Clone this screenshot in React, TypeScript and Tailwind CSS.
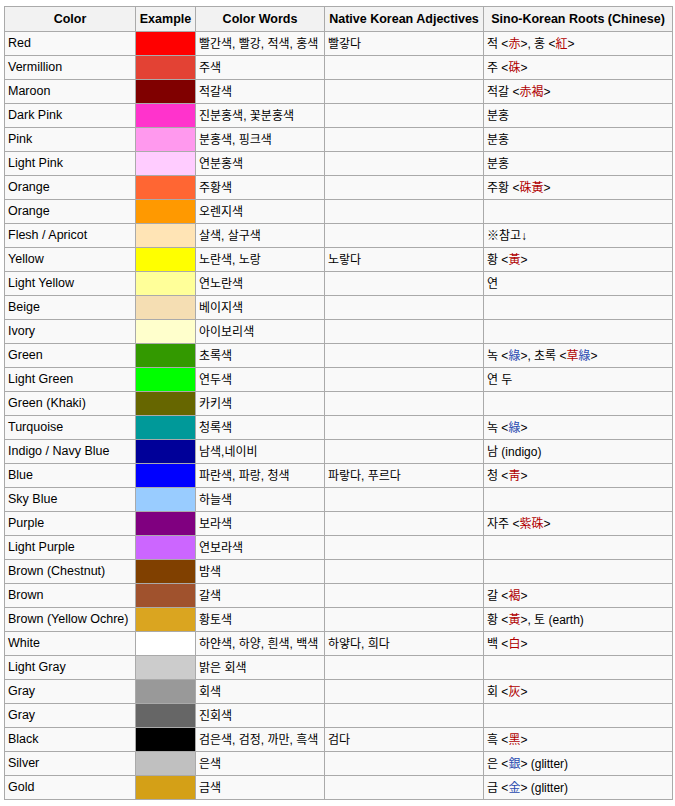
import React from "react";

type Seg = { t: string; c?: "r" | "b" };
type Row = [string, string, string, string, Seg[]];

const R = (t: string): Seg => ({ t, c: "r" });
const B = (t: string): Seg => ({ t, c: "b" });
const T = (t: string): Seg => ({ t });

const rows: Row[] = [
  ["Red", "#ff0000", "빨간색, 빨강, 적색, 홍색", "빨갛다", [T("적 <"), R("赤"), T(">, 홍 <"), R("紅"), T(">")]],
  ["Vermillion", "#e34234", "주색", "", [T("주 <"), R("硃"), T(">")]],
  ["Maroon", "#800000", "적갈색", "", [T("적갈 <"), R("赤褐"), T(">")]],
  ["Dark Pink", "#ff33cc", "진분홍색, 꽃분홍색", "", [T("분홍")]],
  ["Pink", "#ff99ee", "분홍색, 핑크색", "", [T("분홍")]],
  ["Light Pink", "#ffccff", "연분홍색", "", [T("분홍")]],
  ["Orange", "#ff6633", "주황색", "", [T("주황 <"), R("硃黃"), T(">")]],
  ["Orange", "#ff9900", "오렌지색", "", []],
  ["Flesh / Apricot", "#ffe4b5", "살색, 살구색", "", [T("※참고↓")]],
  ["Yellow", "#ffff00", "노란색, 노랑", "노랗다", [T("황 <"), R("黃"), T(">")]],
  ["Light Yellow", "#ffff99", "연노란색", "", [T("연")]],
  ["Beige", "#f5deb3", "베이지색", "", []],
  ["Ivory", "#ffffcc", "아이보리색", "", []],
  ["Green", "#339900", "초록색", "", [T("녹 <"), B("綠"), T(">, 초록 <"), R("草"), B("綠"), T(">")]],
  ["Light Green", "#00ff00", "연두색", "", [T("연 두")]],
  ["Green (Khaki)", "#666600", "카키색", "", []],
  ["Turquoise", "#009999", "청록색", "", [T("녹 <"), B("綠"), T(">")]],
  ["Indigo / Navy Blue", "#000099", "남색,네이비", "", [T("남 (indigo)")]],
  ["Blue", "#0000ff", "파란색, 파랑, 청색", "파랗다, 푸르다", [T("청 <"), R("靑"), T(">")]],
  ["Sky Blue", "#99ccff", "하늘색", "", []],
  ["Purple", "#800080", "보라색", "", [T("자주 <"), R("紫硃"), T(">")]],
  ["Light Purple", "#cc66ff", "연보라색", "", []],
  ["Brown (Chestnut)", "#804000", "밤색", "", []],
  ["Brown", "#a0522d", "갈색", "", [T("갈 <"), R("褐"), T(">")]],
  ["Brown (Yellow Ochre)", "#daa520", "황토색", "", [T("황 <"), R("黃"), T(">, 토 (earth)")]],
  ["White", "#ffffff", "하얀색, 하양, 흰색, 백색", "하얗다, 희다", [T("백 <"), R("白"), T(">")]],
  ["Light Gray", "#cccccc", "밝은 회색", "", []],
  ["Gray", "#999999", "회색", "", [T("회 <"), R("灰"), T(">")]],
  ["Gray", "#666666", "진회색", "", []],
  ["Black", "#000000", "검은색, 검정, 까만, 흑색", "검다", [T("흑 <"), R("黑"), T(">")]],
  ["Silver", "#c0c0c0", "은색", "", [T("은 <"), B("銀"), T("> (glitter)")]],
  ["Gold", "#d4a017", "금색", "", [T("금 <"), B("金"), T("> (glitter)")]],
];

const td = "border border-[#aaaaaa] px-[3px] h-[24px] align-middle whitespace-nowrap";

export default function App() {
  return (
    <div
      className="bg-white pt-[6px] pl-[4px] text-[12.5px] text-black"
      style={{ fontFamily: '"Liberation Sans", "Noto Sans CJK KR", sans-serif' }}
    >
      <table className="border-collapse table-fixed bg-[#f9f9f9]" style={{ width: 668 }}>
        <colgroup>
          <col className="w-[131px]" />
          <col className="w-[60px]" />
          <col className="w-[129px]" />
          <col className="w-[159px]" />
          <col className="w-[189px]" />
        </colgroup>
        <thead>
          <tr className="bg-[#f2f2f2]">
            {["Color", "Example", "Color Words", "Native Korean Adjectives", "Sino-Korean Roots (Chinese)"].map((h) => (
              <th key={h} className="border border-[#aaaaaa] h-[25px] text-center font-bold px-[2px] whitespace-nowrap">
                {h}
              </th>
            ))}
          </tr>
        </thead>
        <tbody>
          {rows.map((r, i) => (
            <tr key={i}>
              <td className={td}>{r[0]}</td>
              <td className="border border-[#aaaaaa] h-[24px] p-0" style={{ background: r[1] }} />
              <td className={td + " text-[12px]"}>{r[2]}</td>
              <td className={td + " text-[12px]"}>{r[3]}</td>
              <td className={td + " text-[12px]"}>
                {r[4].map((s, j) => (
                  <span key={j} className={s.c === "r" ? "text-[#b00000]" : s.c === "b" ? "text-[#2a4bb0]" : ""}>
                    {s.t}
                  </span>
                ))}
              </td>
            </tr>
          ))}
        </tbody>
      </table>
    </div>
  );
}
